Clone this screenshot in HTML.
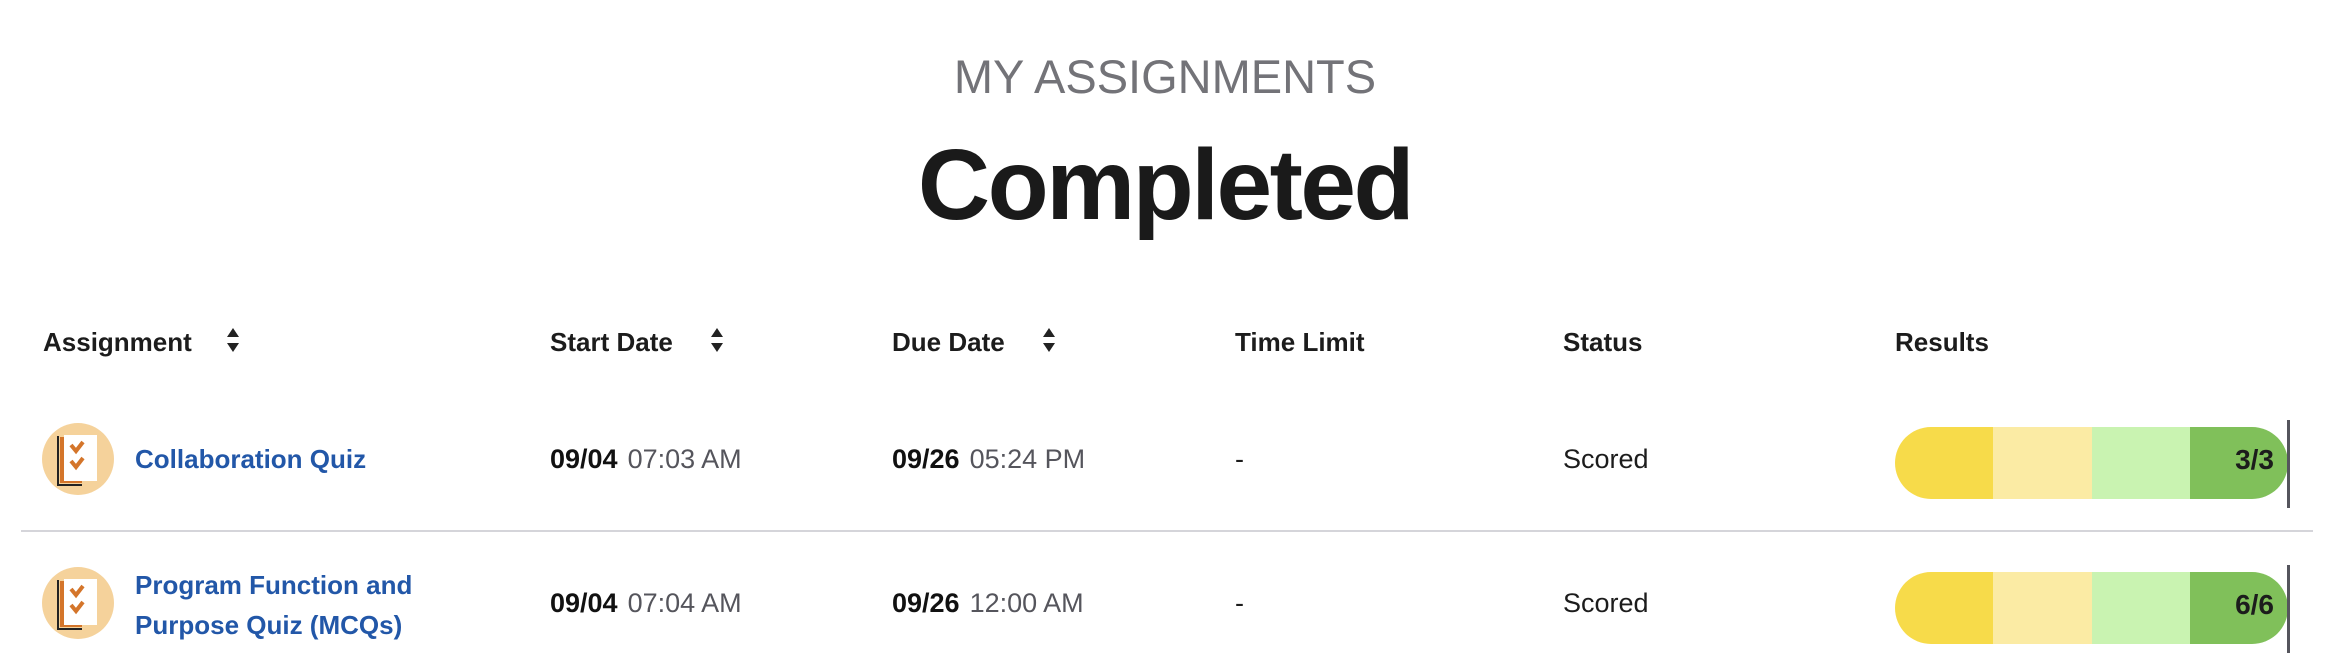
<!DOCTYPE html>
<html><head><meta charset="utf-8"><style>
html,body{margin:0;padding:0;background:#fff;width:2330px;height:664px;overflow:hidden;font-family:"Liberation Sans",sans-serif;}
.a{position:absolute;white-space:nowrap;}
.h{font-size:26px;font-weight:bold;color:#1c1c1c;top:327px;}
.sort{position:absolute;width:14px;height:26px;}
.t{font-size:27px;color:#1c1c1c;}
.d b{font-weight:bold;color:#111;}
.d span{color:#55555c;margin-left:10px;}
.link{color:#2257a8;font-size:26px;font-weight:bold;}
.bar{position:absolute;left:1895px;width:393px;height:72px;border-radius:36px;overflow:hidden;display:flex;}
.bar div{flex:1;}
.bar .s4{position:relative;}
.bar .s4 span{position:absolute;right:14px;top:17px;font-size:28px;font-weight:bold;color:#1c1c1c;}
.cur{position:absolute;left:2287px;width:3px;height:88px;background:#55555d;}
</style></head><body>
<div class="a" style="left:0;width:2330px;text-align:center;top:49px;font-size:47px;color:#737378;">MY ASSIGNMENTS</div>
<div class="a" style="left:0;width:2330px;text-align:center;top:128px;font-size:100px;font-weight:bold;color:#1a1a1a;letter-spacing:-2.5px;">Completed</div>

<div class="a h" style="left:43px;">Assignment</div>
<svg class="sort" style="left:226px;top:327px" viewBox="0 0 14 26"><path d="M7 1 L13 10 H1Z M7 25 L13 16 H1Z" fill="#222"/></svg>
<div class="a h" style="left:550px;">Start Date</div>
<svg class="sort" style="left:710px;top:327px" viewBox="0 0 14 26"><path d="M7 1 L13 10 H1Z M7 25 L13 16 H1Z" fill="#222"/></svg>
<div class="a h" style="left:892px;">Due Date</div>
<svg class="sort" style="left:1042px;top:327px" viewBox="0 0 14 26"><path d="M7 1 L13 10 H1Z M7 25 L13 16 H1Z" fill="#222"/></svg>
<div class="a h" style="left:1235px;">Time Limit</div>
<div class="a h" style="left:1563px;">Status</div>
<div class="a h" style="left:1895px;">Results</div>

<!-- row 1 -->
<svg class="a" style="left:42px;top:423px" width="72" height="72" viewBox="0 0 72 72">
<circle cx="36" cy="36" r="36" fill="#f5d29b"/>
<path d="M16 13 V62 H40" stroke="#222" stroke-width="2" fill="none"/>
<rect x="18" y="14" width="22" height="46" fill="#d4752a"/>
<rect x="22" y="12" width="33" height="46" fill="#fff"/>
<path d="M29 22 l5 6 l7 -9 M29 38 l5 6 l7 -9" stroke="#d4752a" stroke-width="4" fill="none"/>
</svg>
<div class="a link" style="left:135px;top:444px;">Collaboration Quiz</div>
<div class="a t d" style="left:550px;top:444px;"><b>09/04</b><span>07:03 AM</span></div>
<div class="a t d" style="left:892px;top:444px;"><b>09/26</b><span>05:24 PM</span></div>
<div class="a t" style="left:1235px;top:444px;">-</div>
<div class="a t" style="left:1563px;top:444px;">Scored</div>
<div class="bar" style="top:427px"><div style="background:#f7db4a"></div><div style="background:#fbeba4"></div><div style="background:#c9f3b1"></div><div class="s4" style="background:#80c05a"><span>3/3</span></div></div>
<div class="cur" style="top:420px"></div>

<div class="a" style="left:21px;top:530px;width:2292px;height:2px;background:#d5d5da;"></div>

<!-- row 2 -->
<svg class="a" style="left:42px;top:567px" width="72" height="72" viewBox="0 0 72 72">
<circle cx="36" cy="36" r="36" fill="#f5d29b"/>
<path d="M16 13 V62 H40" stroke="#222" stroke-width="2" fill="none"/>
<rect x="18" y="14" width="22" height="46" fill="#d4752a"/>
<rect x="22" y="12" width="33" height="46" fill="#fff"/>
<path d="M29 22 l5 6 l7 -9 M29 38 l5 6 l7 -9" stroke="#d4752a" stroke-width="4" fill="none"/>
</svg>
<div class="a link" style="left:135px;top:565px;line-height:40px;">Program Function and<br>Purpose Quiz (MCQs)</div>
<div class="a t d" style="left:550px;top:588px;"><b>09/04</b><span>07:04 AM</span></div>
<div class="a t d" style="left:892px;top:588px;"><b>09/26</b><span>12:00 AM</span></div>
<div class="a t" style="left:1235px;top:588px;">-</div>
<div class="a t" style="left:1563px;top:588px;">Scored</div>
<div class="bar" style="top:572px"><div style="background:#f7db4a"></div><div style="background:#fbeba4"></div><div style="background:#c9f3b1"></div><div class="s4" style="background:#80c05a"><span>6/6</span></div></div>
<div class="cur" style="top:565px"></div>
</body></html>
